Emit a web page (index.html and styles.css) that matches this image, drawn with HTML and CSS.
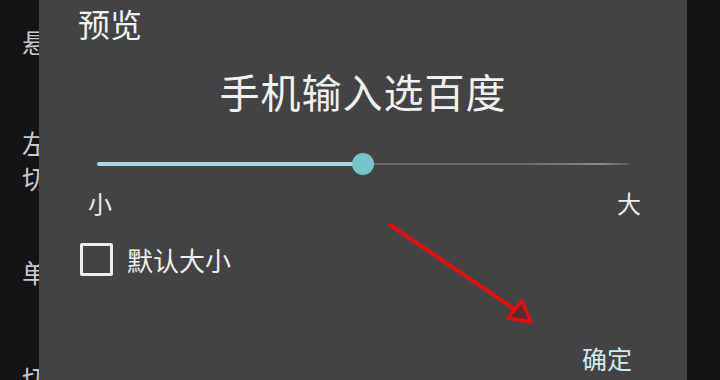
FILE: index.html
```html
<!DOCTYPE html>
<html lang="zh">
<head>
<meta charset="utf-8">
<link rel="stylesheet" href="styles.css">
</head>
<body>
<div class="screen">
  <ul class="menu">
    <li class="m1">悬</li>
    <li class="m2">左</li>
    <li class="m3">切</li>
    <li class="m4">单</li>
    <li class="m5">切</li>
  </ul>
  <div class="dialog">
    <div class="title">预览</div>
    <div class="preview">手机输入选百度</div>
    <div class="slider">
      <div class="track"><div class="fill" style="width:50%"></div></div>
      <div class="thumb" style="left:50%"></div>
    </div>
    <div class="ends"><span>小</span><span>大</span></div>
    <label class="check"><span class="box"></span><span class="clabel">默认大小</span></label>
    <div class="actions"><span class="ok">确定</span></div>
  </div>
  <svg class="arrow" width="720" height="380" viewBox="0 0 720 380">
    <line x1="390" y1="225" x2="522" y2="314" stroke="#e01010" stroke-width="4" stroke-linecap="round"/>
    <polygon points="531,322 508,318 522,301" fill="#5a2a2c" stroke="#e01010" stroke-width="3.5" stroke-linejoin="round"/>
  </svg>
</div>
</body>
</html>
```
FILE: styles.css
```css
* { box-sizing: border-box; }
html, body { margin: 0; padding: 0; }
body {
  width: 720px;
  height: 380px;
  overflow: hidden;
  background: #141416;
  font-family: "Noto Sans CJK SC", "Noto Sans", sans-serif;
}
.screen {
  position: relative;
  width: 720px;
  height: 380px;
  overflow: hidden;
}
.menu {
  list-style: none;
  margin: 0;
  padding: 0 0 0 22px;
  display: flex;
  flex-direction: column;
  color: #c9c9c9;
  font-size: 26px;
  line-height: 26px;
}
.menu li { height: 26px; }
.m1 { margin-top: 29px; }
.m2 { margin-top: 75px; }
.m3 { margin-top: 9px; }
.m4 { margin-top: 68px; }
.m5 { margin-top: 80px; }

.dialog {
  position: absolute;
  left: 39px;
  top: 0;
  width: 648px;
  height: 380px;
  background: #434345;
  display: flex;
  flex-direction: column;
  color: #f2f2f2;
}
.title {
  font-size: 32px;
  line-height: 32px;
  margin: 7px 0 0 39px;
}
.preview {
  font-size: 40px;
  line-height: 40px;
  text-align: center;
  margin-top: 32px;
  letter-spacing: 1px;
}
.slider {
  position: relative;
  margin: 41px 58px 0 58px;
  height: 24px;
}
.track {
  position: absolute;
  left: 0;
  right: 0;
  top: 11px;
  height: 2px;
  background: linear-gradient(to right, #6a6a6c 0%, #6a6a6c 80%, #8a8a8c 95%, #5a5a5c 100%);
}
.fill {
  height: 4px;
  margin-top: -1px;
  background: #a9d6e6;
  border-radius: 2px;
}
.thumb {
  position: absolute;
  top: 1px;
  width: 22px;
  height: 22px;
  margin-left: -11px;
  border-radius: 50%;
  background: #78c5c8;
}
.ends {
  display: flex;
  justify-content: space-between;
  margin: 13px 46px 0 49px;
  font-size: 24px;
  line-height: 28px;
  color: #ececec;
}
.check {
  display: flex;
  align-items: center;
  margin: 26px 0 0 41px;
  gap: 14px;
}
.box {
  width: 33px;
  height: 33px;
  border: 3px solid #ededed;
  border-radius: 2px;
}
.clabel {
  font-size: 26px;
  line-height: 30px;
  color: #f0f0f0;
}
.actions {
  display: flex;
  justify-content: flex-end;
  margin: 68px 55px 0 0;
}
.ok {
  font-size: 25px;
  line-height: 28px;
  color: #d2eaee;
}
.arrow {
  position: absolute;
  left: 0;
  top: 0;
  pointer-events: none;
}
```
